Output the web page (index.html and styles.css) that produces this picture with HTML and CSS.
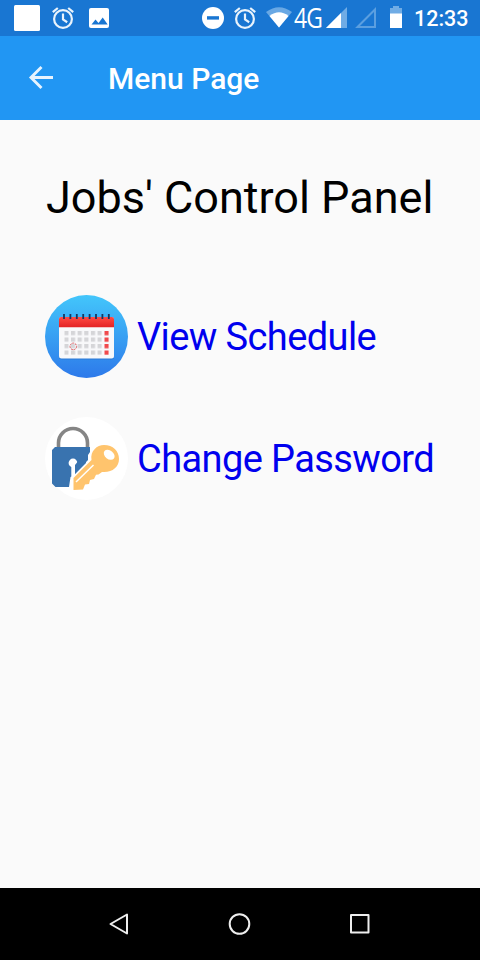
FILE: index.html
```html
<!DOCTYPE html>
<html lang="en">
<head>
<meta charset="utf-8">
<title>Menu Page</title>
<link rel="stylesheet" href="styles.css">
</head>
<body>
<div class="status">
  <svg class="status-icons" width="120" height="36" viewBox="0 0 120 36">
    <rect x="14" y="5" width="26" height="26" rx="1.5" fill="#fff"/>
    <g fill="none" stroke="#e9f3fc" stroke-width="2.2"><circle cx="63" cy="19" r="8.9"/><path d="M63 13.5V19.5l4.2 2.7"/><path d="M52.8 12.2l5-4.2M73.2 12.2l-5-4.2"/></g>
    <rect x="89" y="8" width="20" height="20" rx="2" fill="#fff"/>
    <path d="M91.5 24.5l4-5 3 3.5 4.2-5.5 5 7z" fill="#1976d2"/>
  </svg>
  <svg class="status-icons" width="94" height="36" viewBox="200 0 94 36">
    <circle cx="213" cy="18" r="11" fill="#fff"/><rect x="207" y="16.2" width="12" height="3.4" fill="#1976d2"/>
    <g fill="none" stroke="#e9f3fc" stroke-width="2.2"><circle cx="245" cy="19" r="8.9"/><path d="M245 13.5V19.5l4.2 2.7"/><path d="M234.8 12.2l5-4.2M255.2 12.2l-5-4.2"/></g>
    <path d="M266 12Q279 2.5 292 12L279 27.5z" fill="#69a8e4"/><path d="M269.5 16Q279 8.500 288.500 16L279 27.500z" fill="#fff"/>
  </svg>
  <span class="network">4G</span>
  <svg class="status-icons" width="82" height="36" viewBox="324 0 82 36">
    <path d="M326 28L347 7V28z" fill="#70ace5"/><path d="M326 28L341 13V28z" fill="#fff"/>
    <path d="M357.5 27L375 9.5V27z" fill="none" stroke="#5b9fe0" stroke-width="2"/>
    <path d="M390 8h3V6h6v2h3v6h-12z" fill="#70ace5"/><path d="M390 13.5h12V28h-12z" fill="#fff"/>
  </svg>
  <span class="clock">12:33</span>
</div>
<header class="appbar">
  <svg class="back" width="26" height="26" viewBox="0 0 26 26"><path d="M25 12.500H3.500M13.500 2L3 12.500l10.500 10.500" fill="none" stroke="#e6f3fe" stroke-width="2.900"/></svg>
  <h1 class="appbar-title">Menu Page</h1>
</header>
<main class="content">
  <h2 class="heading">Jobs' Control Panel</h2>
  <a class="item">
    <svg class="item-icon" viewBox="0 0 83 83">
      <defs>
        <linearGradient id="sky" x1="0" y1="0" x2="0" y2="1"><stop offset="0" stop-color="#43c6fb"/><stop offset="1" stop-color="#2d79ea"/></linearGradient>
        <linearGradient id="red" x1="0" y1="0" x2="0" y2="1"><stop offset="0" stop-color="#ff4a43"/><stop offset="1" stop-color="#e32224"/></linearGradient>
        <pattern id="days" x="19.3" y="36" width="6.65" height="6.5" patternUnits="userSpaceOnUse"><rect width="4.2" height="4.2" fill="#d5d5d8"/></pattern>
        <pattern id="sundays" x="59.3" y="36" width="6.65" height="6.5" patternUnits="userSpaceOnUse"><rect width="4.3" height="4.3" fill="#f0494c"/></pattern>
      </defs>
      <circle cx="41.5" cy="41.5" r="41.5" fill="url(#sky)"/>
      <rect x="14" y="24" width="55" height="40.5" rx="2.5" fill="#2869bd" opacity=".5"/>
      <rect x="14" y="22" width="55" height="41.5" rx="2.5" fill="#f8f8fa"/>
      <path d="M14 32.3V24a2 2 0 0 1 2-2h51a2 2 0 0 1 2 2v8.300z" fill="url(#red)"/>
      <path d="M19 19v5M25.400 19v5M31.800 19v5M38.200 19v5M44.600 19v5M51 19v5M57.400 19v5M63.800 19v5" stroke="#15365f" stroke-width="1.8"/>
      <rect x="19.300" y="36" width="38" height="24" fill="url(#days)"/>
      <rect x="59.300" y="36" width="5" height="24" fill="url(#sundays)"/>
      <circle cx="28.300" cy="51.400" r="3.300" fill="none" stroke="#d9575a" stroke-width="1" stroke-dasharray="2 .8"/>
    </svg>
    <span class="item-label">View Schedule</span>
  </a>
  <a class="item">
    <svg class="item-icon" viewBox="0 0 83 83">
      <circle cx="41.5" cy="41.5" r="41.5" fill="#fff"/>
      <path d="M13.500 31V26a14.500 14.500 0 0 1 29 0v5" fill="none" stroke="#858585" stroke-width="3.600"/>
      <path d="M10 30H45V35L43 38V43L28 59L25.500 60L24 70H10.500L7 66.500V33z" fill="#3973af"/>
      <circle cx="28" cy="46" r="4.400" fill="#fff"/><path d="M26.300 48h3.700v12h-3.700z" fill="#fff"/>
      <path d="M30 48V57L41 46V43H34z" fill="#3973af"/>
      <path d="M28.500 73V61L46.500 43C45 34 52 28 59 28C68 28 74 34 74 42C74 50 67 56 57 55L53.500 57.500L51 57.800L49 62L45 63L44 67L40 67.500L38 72.500z" fill="#ffc46d"/>
      <ellipse cx="64.200" cy="37.800" rx="6" ry="4.300" transform="rotate(38 64.2 37.8)" fill="#fff"/>
      <path d="M31 65L48.500 48" stroke="#fff" stroke-width="1.500"/>
    </svg>
    <span class="item-label">Change Password</span>
  </a>
</main>
<nav class="navbar">
  <svg width="24" height="24" viewBox="0 0 24 24"><path d="M19 2.500v19L2.500 12z"/></svg>
  <svg width="24" height="24" viewBox="0 0 24 24"><circle cx="11.500" cy="12" r="9.800"/></svg>
  <svg width="24" height="24" viewBox="0 0 24 24"><rect x="3" y="3" width="17.500" height="17.500"/></svg>
</nav>
</body>
</html>
```
FILE: styles.css
```css
* { box-sizing: border-box; }
body {
  margin: 0;
  height: 960px;
  display: flex;
  flex-direction: column;
  font-family: Roboto, sans-serif;
  background: #fafafa;
  overflow: hidden;
}
svg { display: block; flex: none; }
.status {
  height: 36px;
  display: flex;
  align-items: center;
  background: #1976d2;
  color: #fff;
}
.status-icons:first-child { margin-right: 80px; }
.network {
  width: 30px;
  font: 27px/36px "Open Sans", sans-serif;
  letter-spacing: -1px;
  white-space: nowrap;
  transform: scaleX(.85);
  transform-origin: left;
}
.clock {
  margin: 2px 0 0 8px;
  font-size: 21.5px;
  font-weight: 500;
  line-height: 36px;
}
.appbar {
  height: 84px;
  display: flex;
  align-items: center;
  padding-left: 28px;
  background: #2196f3;
  color: #fff;
}
.appbar-title {
  margin: 2px 0 0 54px;
  font-size: 30px;
  font-weight: 500;
  line-height: 36px;
}
.content {
  flex: 1;
  padding: 51px 0 0 45px;
}
.heading {
  margin: 0 0 70px 1px;
  font-size: 45px;
  font-weight: 400;
  line-height: 54px;
  color: #000;
  white-space: nowrap;
}
.item {
  display: flex;
  align-items: center;
  gap: 9px;
  height: 83px;
  margin-bottom: 39px;
  color: #0000ee;
}
.item-icon { width: 83px; height: 83px; }
.item-label {
  font-size: 38px;
  letter-spacing: -.6px;
  line-height: 46px;
  white-space: nowrap;
}
.navbar {
  height: 72px;
  display: flex;
  align-items: center;
  justify-content: center;
  gap: 96px;
  background: #000;
}
.navbar svg { fill: none; stroke: #eee; stroke-width: 2; stroke-linejoin: round; }
```
